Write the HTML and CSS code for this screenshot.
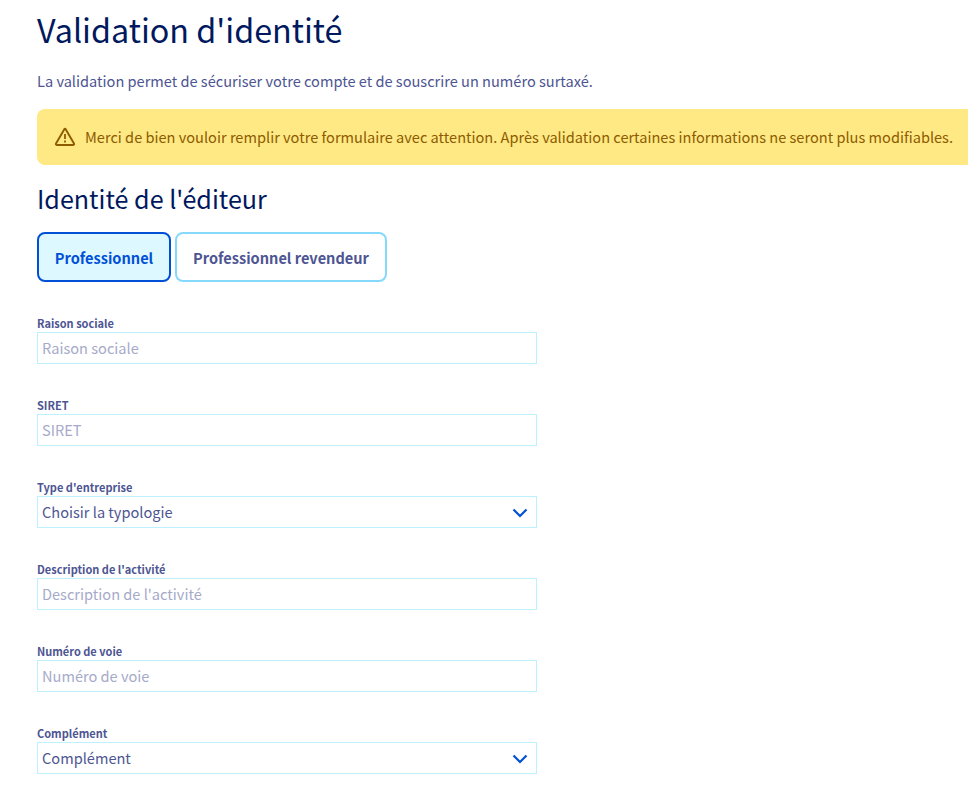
FILE: index.html
```html
<!DOCTYPE html>
<html lang="fr">
<head>
<meta charset="utf-8">
<title>Validation d'identité</title>
<link rel="stylesheet" href="styles.css">
</head>
<body>
<main class="page">
  <h1 class="title">Validation d'identité</h1>
  <p class="intro">La validation permet de sécuriser votre compte et de souscrire un numéro surtaxé.</p>
  <div class="alert">
    <svg class="alert-icon" viewBox="0 0 22 20"><path d="M10.2 2.4 Q11 1.2 11.800 2.400 L20 16.600 Q20.500 18 19.200 18 H2.800 Q1.500 18 2 16.600 Z" fill="none" stroke="currentColor" stroke-width="1.9" stroke-linejoin="round"/><path d="M11 7v5M11 13.500v2" stroke="currentColor" stroke-width="1.8"/></svg>
    <p class="alert-text">Merci de bien vouloir remplir votre formulaire avec attention. Après validation certaines informations ne seront plus modifiables.</p>
  </div>
  <h2 class="subtitle">Identité de l'éditeur</h2>
  <div class="tabs">
    <button class="tab tab-pro tab-active" type="button">Professionnel</button>
    <button class="tab tab-reseller" type="button">Professionnel revendeur</button>
  </div>
  <form class="form">
    <label class="field"><span class="label">Raison sociale</span><span class="control placeholder">Raison sociale</span></label>
    <label class="field"><span class="label">SIRET</span><span class="control placeholder">SIRET</span></label>
    <label class="field"><span class="label">Type d'entreprise</span><span class="control">Choisir la typologie<svg class="chevron" viewBox="0 0 16 10"><path d="M1.5 1.5 8 8l6.5-6.5" fill="none" stroke="currentColor" stroke-width="2.2"/></svg></span></label>
    <label class="field"><span class="label">Description de l'activité</span><span class="control placeholder">Description de l'activité</span></label>
    <label class="field"><span class="label">Numéro de voie</span><span class="control placeholder">Numéro de voie</span></label>
    <label class="field"><span class="label">Complément</span><span class="control">Complément<svg class="chevron" viewBox="0 0 16 10"><path d="M1.5 1.5 8 8l6.5-6.5" fill="none" stroke="currentColor" stroke-width="2.2"/></svg></span></label>
  </form>
</main>
</body>
</html>
```
FILE: styles.css
```css
* { box-sizing: border-box; }
body { margin: 0; overflow: hidden; background: #fff; color: #4d5592; font: 14.58px/24px "Noto Sans CJK SC", sans-serif; }
.page { width: 968px; height: 804px; padding: 7px 0 0 37px; overflow: hidden; white-space: nowrap; }
.title, .subtitle { margin: 0; color: #00185e; font-weight: 400; }
.title { font-size: 32.3px; line-height: 44px; }
.intro { margin: 18px 0 16px; }
.alert { display: flex; align-items: center; height: 56px; padding-left: 17px; gap: 9px; background: #fee985; color: #8e5b00; border-radius: 8px 0 0 8px; }
.alert-icon { width: 22px; height: 20px; flex: none; }
.alert-text { margin: 0; }
.subtitle { margin-top: 17px; font-size: 25.1px; line-height: 32px; }
.tabs { display: flex; gap: 4px; margin-top: 18px; }
.tab { height: 50px; padding: 2px 0 0; background: #fff; border: 2px solid #85d9fd; border-radius: 8px; color: #4d5592; font: 700 14.58px/24px "Noto Sans CJK SC", sans-serif; }
.tab-pro { width: 134px; }
.tab-reseller { width: 212px; }
.tab-active { background: #def8ff; border-color: #0050d7; color: #0050d7; }
.form { display: grid; gap: 34px; width: 500px; margin-top: 34px; }
.field { display: block; height: 48px; }
.label { display: block; height: 16px; font-size: 11px; line-height: 14px; font-weight: 700; }
.control { display: flex; align-items: center; justify-content: space-between; height: 32px; padding: 0 8px 0 4px; border: 1px solid #bef1ff; }
.placeholder { color: #a6aac9; }
.chevron { width: 16px; height: 10px; margin-top: 2px; color: #0050d7; }
```
